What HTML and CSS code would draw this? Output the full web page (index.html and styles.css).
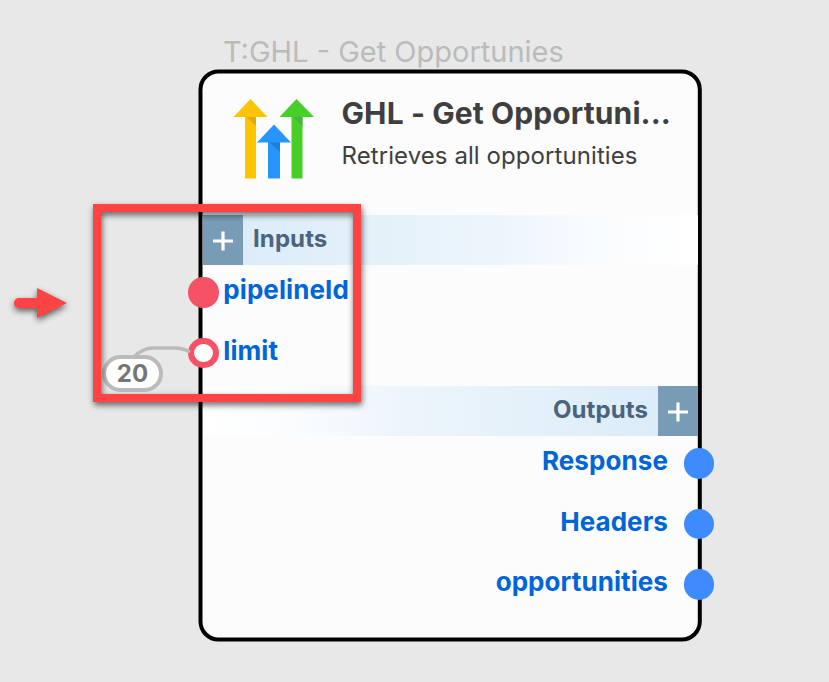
FILE: index.html
```html
<!DOCTYPE html>
<html lang="en">
<head>
<meta charset="utf-8">
<title>GHL - Get Opportunities</title>
<link rel="stylesheet" href="styles.css">
</head>
<body>
<main class="canvas">
  <div class="node-label"><span>T:GHL - Get Opportunies</span></div>
  <article class="node">
    <svg class="frame" width="504" height="573" viewBox="0 0 504 573"><rect x="2.5" y="2.5" width="499.300" height="568" rx="18" fill="#fcfcfc" stroke="#000" stroke-width="4"/></svg>
    <header class="node-header">
      <svg class="logo" width="82" height="82" viewBox="0 0 82 82">
        <path fill="#ffc400" d="M0.5 18 17.5 0 34.500 18H23V79.500H12V18z"/>
        <path fill="#47cf28" d="M46.500 18 63.500 0 81 18H69.500V79.500H58.500V18z"/>
        <path fill="#2895ff" d="M24 43.500 41 25.500 58 43.500H47V79.500H35V43.500z"/>
        <path fill="#dfac0c" d="M13.500 18H23V27z"/>
        <path fill="#4bb148" d="M60 18h9.500v9z"/>
        <path fill="#1f7edb" d="M36.500 43.500H47V53z"/>
      </svg>
      <div class="heading">
        <h1>GHL - Get Opportuni...</h1>
        <p>Retrieves all opportunities</p>
      </div>
    </header>
    <section class="inputs">
      <div class="bar"><span class="add"><svg width="20" height="20" viewBox="0 0 20 20"><path d="M10 0.500V19.500M0 10H20" stroke="#fff" stroke-width="3.200"/></svg></span><h2>Inputs</h2></div>
      <div class="port"><i class="dot"></i><span class="pipeline">pipelineId</span></div>
      <div class="port"><i class="dot hollow"></i><span class="limit">limit</span></div>
    </section>
    <section class="outputs">
      <div class="bar"><h2>Outputs</h2><span class="add"><svg width="20" height="20" viewBox="0 0 20 20"><path d="M10 0.500V19.500M0 10H20" stroke="#fff" stroke-width="3.200"/></svg></span></div>
      <div class="port"><span>Response</span><i class="dot"></i></div>
      <div class="port"><span>Headers</span><i class="dot"></i></div>
      <div class="port"><span>opportunities</span><i class="dot"></i></div>
    </section>
  </article>
  <svg class="wire" width="829" height="682" viewBox="0 0 829 682"><path d="M134 357Q143 348 153 348H174Q183 348 190 352" fill="none" stroke="#bbb" stroke-width="3.600"/></svg>
  <div class="value">20</div>
  <div class="highlight"></div>
  <svg class="pointer" width="60" height="50" viewBox="0 0 60 50"><path fill="#ff4242" d="M9 18H27V8L57 23 27 38V28H9A5 5 0 0 1 9 18z"/></svg>
</main>
</body>
</html>
```
FILE: styles.css
```css
* { box-sizing: border-box; }
body { margin: 0; background: #e8e8e8; font-family: Inter, "Liberation Sans", sans-serif; }
.canvas { position: relative; width: 829px; height: 682px; overflow: hidden; }
h1, h2, p { margin: 0; white-space: nowrap; }

.node-label {
  height: 69px;
  padding: 34px 0 0 223px;
  font-size: 29px;
  line-height: 35px;
  color: #bbb;
  white-space: nowrap;
}
.node { position: relative; width: 504px; height: 573px; margin-left: 198px; }
.frame { position: absolute; left: 0; top: 0; }

.node-header { position: relative; display: flex; height: 145.500px; padding: 30px 0 0 35px; }
.logo { flex: none; }
.heading { margin-left: 26.500px; color: #3f3f3f; }
.heading h1 { font-size: 30px; line-height: 36px; margin-top: -4px; font-weight: 700; letter-spacing: .1px; }
.heading p { font-size: 24px; line-height: 30px; margin-top: 10px; letter-spacing: .08px; }

.inputs { position: relative; height: 171px; }
.outputs { position: relative; }
.bar { display: flex; height: 50.500px; margin: 0 4px 0 4.500px; }
.inputs .bar { background: linear-gradient(90deg, #d9eaf8, #e3f1fa 33%, #edf5fc 60%, #f9fcfe 80%, #fff); }
.outputs .bar { background: linear-gradient(270deg, #d9eaf8, #e3f1fa 33%, #edf5fc 60%, #f9fcfe 80%, #fff); justify-content: flex-end; }
.bar h2 { margin: 0 9.500px 0 10px; font-size: 24px; line-height: 48px; font-weight: 700; letter-spacing: .1px; color: #4b647e; }
.add { display: flex; align-items: center; justify-content: center; width: 40.500px; padding-top: 3px; background: #789bb6; }

.port { display: flex; align-items: center; height: 60.500px; font-size: 26px; line-height: 32px; font-weight: 700; letter-spacing: .08px; color: #0065d9; }
.inputs .port { margin-left: -10px; gap: 4.800px; position: relative; top: -3px; }
.outputs .port { justify-content: flex-end; gap: 15.500px; margin-right: -12px; position: relative; top: -3px; }
.port span { margin-top: -4px; }
.dot { flex: none; width: 30.500px; height: 30.500px; border-radius: 50%; background: #3d8bfd; }
.inputs .dot { background: #f65164; }
.inputs .hollow { background: #fff; border: 6px solid #f65164; }

.wire { position: absolute; left: 0; top: 0; }
.value {
  position: absolute; left: 102px; top: 355px; width: 61px; height: 37px;
  border: 4px solid #bbb; border-radius: 19px; background: #fff;
  color: #757575; font-size: 24px; line-height: 29px; font-weight: 700; text-align: center;
}
.highlight {
  position: absolute; left: 93px; top: 204px; width: 268px; height: 198px;
  border: 8px solid #ff4242;
  filter: drop-shadow(1px 3px 3px rgba(0, 0, 0, .6));
}
.pointer { position: absolute; left: 10px; top: 280px; filter: drop-shadow(0 3px 3px rgba(0, 0, 0, .6)); }
```
